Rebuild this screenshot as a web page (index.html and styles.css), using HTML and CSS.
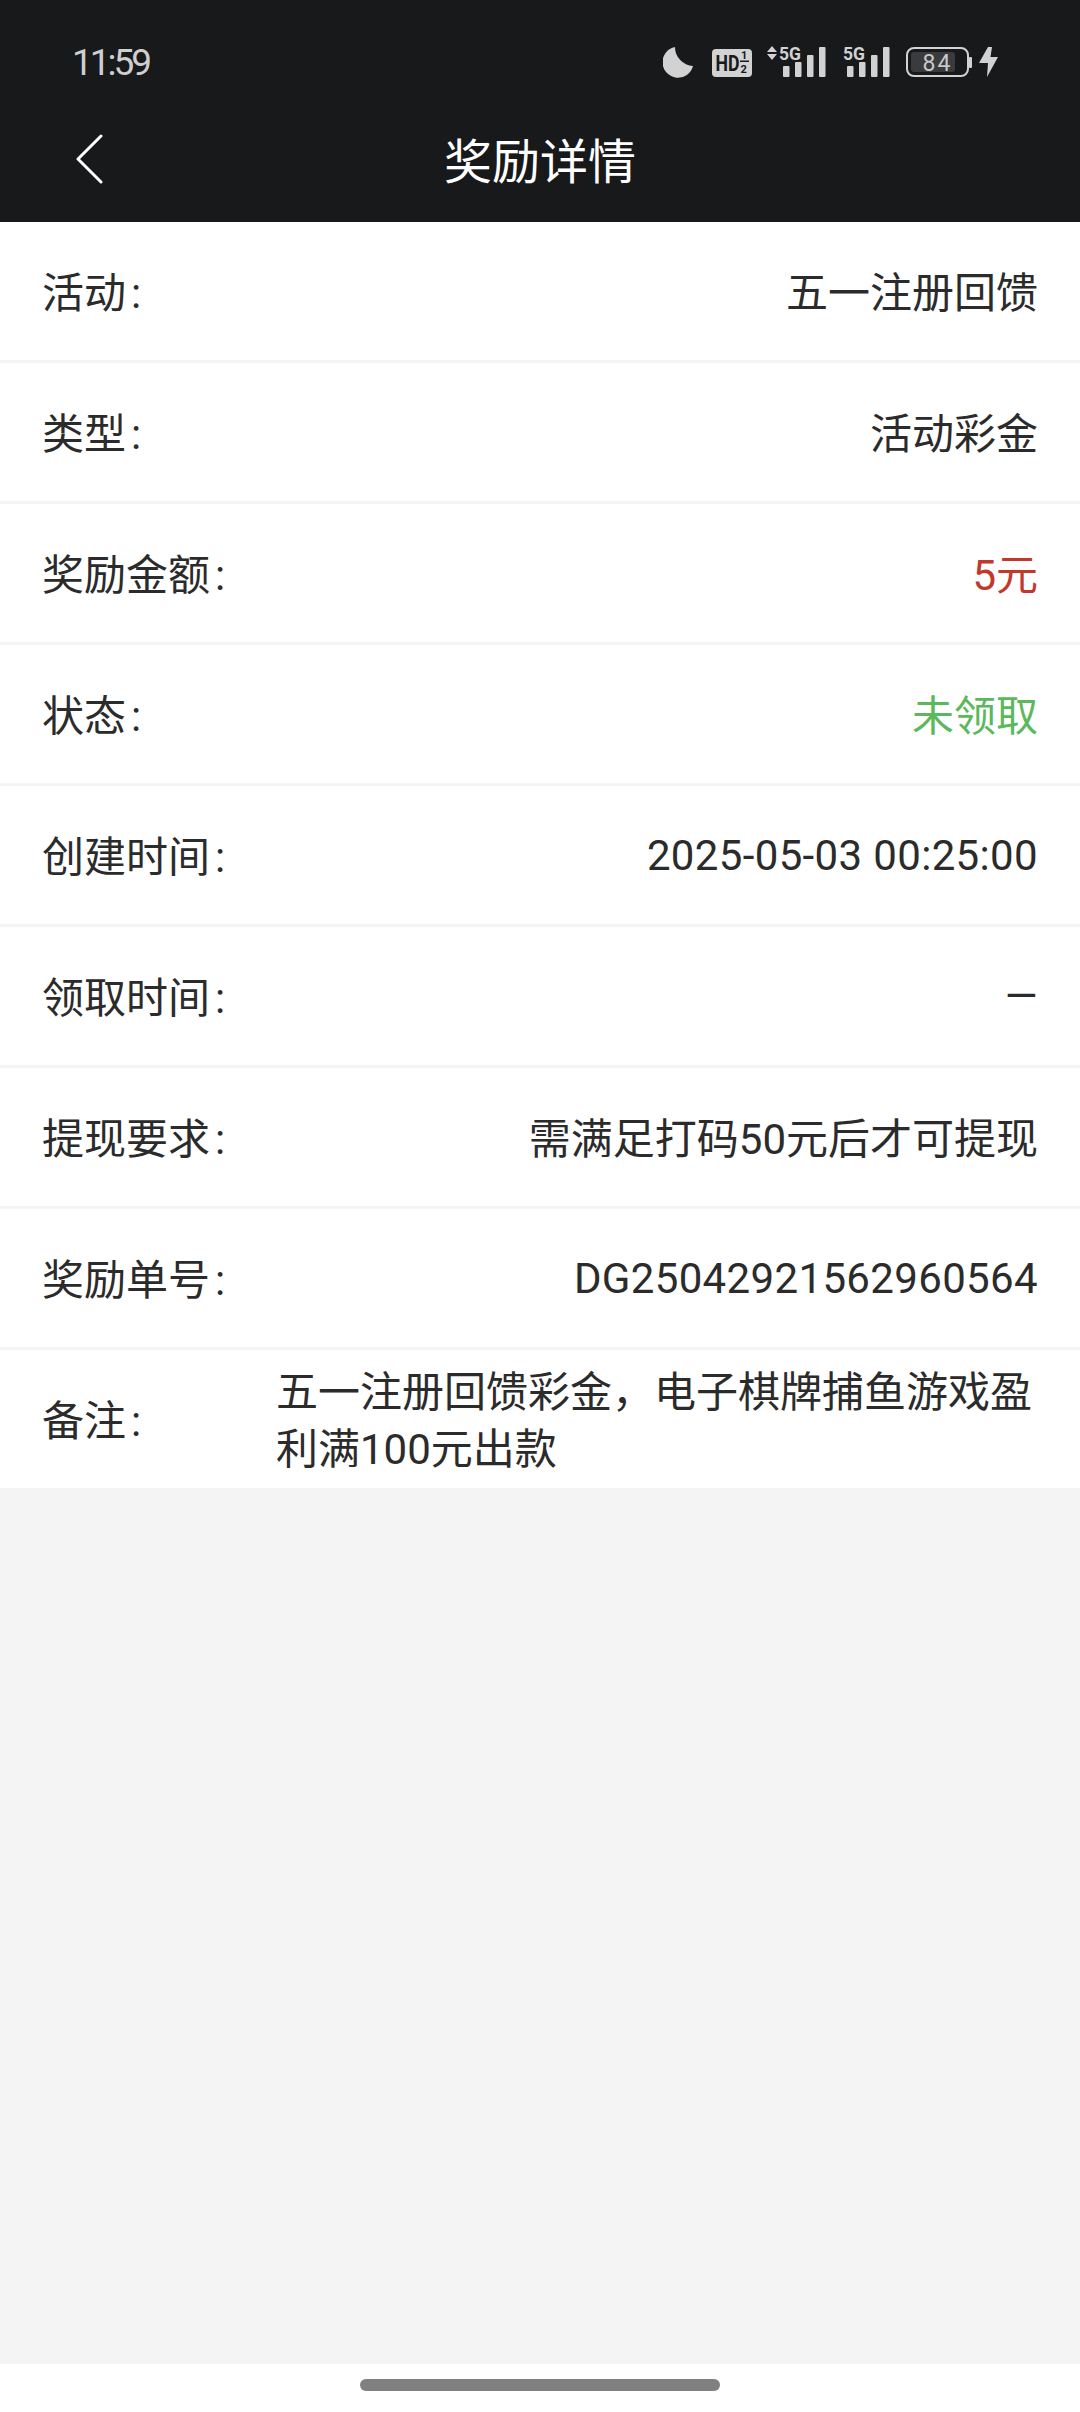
FILE: index.html
```html
<!DOCTYPE html>
<html lang="zh-CN">
<head>
    <meta charset="UTF-8">
    <meta name="viewport" content="width=device-width, initial-scale=1.0">
    <title>奖励详情</title>
    <link rel="stylesheet" href="styles.css">
</head>
<body>
    <div id="page">
        <!-- 顶部 -->
        <header class="top">
            <div class="status">
                <span class="time">11:59</span>
                <div class="icons">
                    <svg class="moon" width="30" height="40" viewBox="0 0 30 40"><path d="M30 24A15.500 15.500 0 1 1 12 5A19 19 0 0 0 30 24Z" fill="#d2d2d2"/></svg>
                    <svg class="hd" width="40" height="40" viewBox="0 0 40 40">
                        <rect y="7" width="40" height="28" rx="4" fill="#d2d2d2"/>
                        <text x="3.500" y="29" class="hd-t" textLength="24" lengthAdjust="spacingAndGlyphs">HD</text>
                        <text x="29" y="17" class="hd-s">1</text>
                        <rect x="28" y="18.500" width="9" height="1.500" fill="#18191b"/>
                        <text x="28.500" y="31" class="hd-s">2</text>
                    </svg>
                    <svg class="sig1" width="60" height="40" viewBox="0 0 60 40">
                        <path d="M1 10L6 4 11 10ZM1 12L6 18 11 12Z" fill="#d2d2d2"/>
                        <text x="13" y="18" class="g5" textLength="22" lengthAdjust="spacingAndGlyphs">5G</text>
                        <rect x="17" y="24" width="6.500" height="11" rx="1" fill="#d2d2d2"/>
                        <rect x="29" y="20" width="6.500" height="15" rx="1" fill="#d2d2d2"/>
                        <rect x="41" y="13" width="6.500" height="22" rx="1" fill="#d2d2d2"/>
                        <rect x="53" y="5" width="6.500" height="30" rx="1" fill="#d2d2d2"/>
                    </svg>
                    <svg class="sig2" width="48" height="40" viewBox="0 0 48 40">
                        <text x="1" y="18" class="g5" textLength="22" lengthAdjust="spacingAndGlyphs">5G</text>
                        <rect x="5" y="24" width="6.500" height="11" rx="1" fill="#d2d2d2"/>
                        <rect x="17" y="20" width="6.500" height="15" rx="1" fill="#d2d2d2"/>
                        <rect x="29" y="13" width="6.500" height="22" rx="1" fill="#d2d2d2"/>
                        <rect x="41" y="5" width="6.500" height="30" rx="1" fill="#d2d2d2"/>
                    </svg>
                    <svg class="bat" width="67" height="40" viewBox="0 0 67 40">
                        <rect x="2" y="6" width="61" height="28" rx="7" fill="none" stroke="#d2d2d2" stroke-width="2"/>
                        <rect x="6" y="10" width="44" height="20" rx="3" fill="#3a3b3d"/>
                        <rect x="64" y="15" width="3" height="11" rx="1" fill="#d2d2d2"/>
                        <text x="17.500" y="28.500" class="bat-t" textLength="28">84</text>
                    </svg>
                    <svg class="bolt" width="20" height="40" viewBox="0 0 20 40"><path d="M9 5L0 21H9L8 35 19 15H11.500L13 5Z" fill="#d2d2d2"/></svg>
                </div>
            </div>
            <div class="nav">
                <svg class="back" width="28" height="50" viewBox="0 0 28 50"><path d="M26 2L3 25 26 48" fill="none" stroke="#fff" stroke-width="3" stroke-linecap="round" stroke-linejoin="round"/></svg>
                <span class="title">奖励详情</span>
            </div>
        </header>

        <!-- 详情列表 -->
        <ul class="list">
            <li class="row"><span class="label">活动<i class="colon">:</i></span><span class="val">五一注册回馈</span></li>
            <li class="row"><span class="label">类型<i class="colon">:</i></span><span class="val">活动彩金</span></li>
            <li class="row"><span class="label">奖励金额<i class="colon">:</i></span><span class="val red">5元</span></li>
            <li class="row"><span class="label">状态<i class="colon">:</i></span><span class="val green">未领取</span></li>
            <li class="row"><span class="label">创建时间<i class="colon">:</i></span><span class="val num">2025-05-03 00:25:00</span></li>
            <li class="row"><span class="label">领取时间<i class="colon">:</i></span><span class="val num">—</span></li>
            <li class="row"><span class="label">提现要求<i class="colon">:</i></span><span class="val">需满足打码50元后才可提现</span></li>
            <li class="row"><span class="label">奖励单号<i class="colon">:</i></span><span class="val num">DG25042921562960564</span></li>
            <li class="row last"><span class="label">备注<i class="colon">:</i></span><span class="note">五一注册回馈彩金，电子棋牌捕鱼游戏盈利满100元出款</span></li>
        </ul>

        <div class="space"></div>

        <!-- 底部横条 -->
        <div class="home"><div class="bar"></div></div>
    </div>
</body>
</html>
```

FILE: styles.css
```css
*{
    margin: 0;
    padding: 0;
    box-sizing: border-box;
}

body{
    font-family: Roboto, "Noto Sans CJK SC", sans-serif;
    background-color: #f4f4f4;
}

#page{
    width: 1080px;
    height: 2412px;
    display: flex;
    flex-direction: column;
}

/* 顶部 */
.top{
    height: 222px;
    background-color: #18191b;
    flex-shrink: 0;
}
.status{
    height: 124px;
    padding: 0 81px 0 72px;
    display: flex;
    align-items: center;
    justify-content: space-between;
}
.time{
    font-size: 37px;
    letter-spacing: -3px;
    color: #cfcfcf;
}
.icons{
    display: flex;
    align-items: center;
}
.moon{ margin-right: 19px; }
.hd{ margin-right: 14px; }
.sig1{ margin-right: 16px; }
.sig2{ margin-right: 15px; }
.bat{ margin-right: 7px; }

.hd-t{
    font: 700 22px Roboto, sans-serif;
    fill: #18191b;
}
.hd-s{
    font: 700 11px Roboto, sans-serif;
    fill: #18191b;
}
.g5{
    font: 700 19px Roboto, sans-serif;
    fill: #d2d2d2;
}
.bat-t{
    font: 400 23px Roboto, sans-serif;
    fill: #c8c8c8;
}

.nav{
    height: 68px;
    padding-left: 75px;
    display: flex;
    align-items: center;
    position: relative;
}
.back{
    margin-top: 2px;
}
.title{
    position: absolute;
    left: 0;
    right: 0;
    text-align: center;
    font-size: 48px;
    color: #fff;
}

/* 列表 */
.list{
    list-style: none;
    background-color: #fff;
    flex-shrink: 0;
}
.row{
    height: 141px;
    padding: 0 42px 4px;
    border-bottom: 3px solid #f4f4f4;
    display: flex;
    align-items: center;
    justify-content: space-between;
    font-size: 42px;
    color: #2b2b2b;
}
.row.last{
    height: 138px;
    padding-bottom: 0;
    border-bottom: none;
    justify-content: flex-start;
}
.label{
    flex-shrink: 0;
}
.colon{
    font-style: normal;
    margin-left: 5px;
}
.last .label{
    width: 235px;
    padding-bottom: 3px;
}
.note{
    line-height: 57px;
    width: 770px;
    padding-top: 4px;
    margin-left: -1px;
}
.num{
    padding-top: 4px;
    letter-spacing: 0.35px;
}
.red{
    color: #c0392b;
}
.green{
    color: #5cb85c;
}

.space{
    flex: 1;
}

/* 底部横条 */
.home{
    height: 48px;
    background-color: #fff;
    display: flex;
    justify-content: center;
    padding-top: 15px;
}
.bar{
    width: 360px;
    height: 12px;
    border-radius: 6px;
    background-color: #808080;
}
```
